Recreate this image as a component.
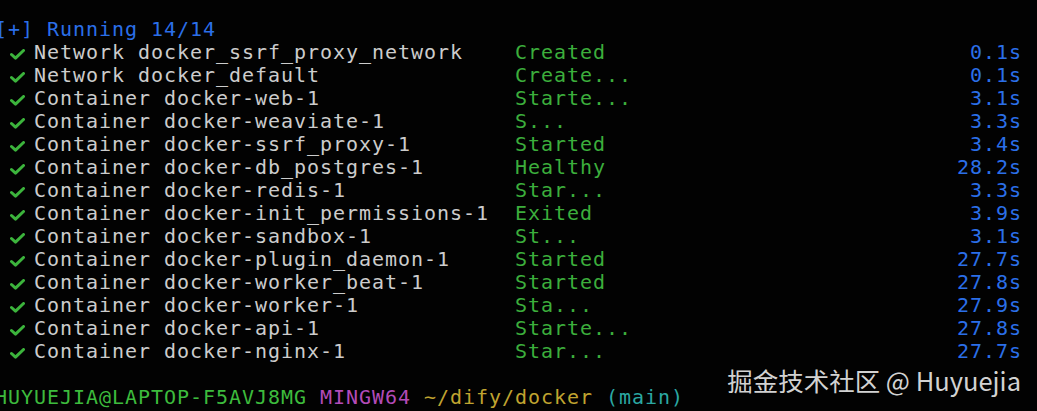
import React from "react";

const rows = [
  ["Network docker_ssrf_proxy_network", "Created", "0.1s"],
  ["Network docker_default", "Create...", "0.1s"],
  ["Container docker-web-1", "Starte...", "3.1s"],
  ["Container docker-weaviate-1", "S...", "3.3s"],
  ["Container docker-ssrf_proxy-1", "Started", "3.4s"],
  ["Container docker-db_postgres-1", "Healthy", "28.2s"],
  ["Container docker-redis-1", "Star...", "3.3s"],
  ["Container docker-init_permissions-1", "Exited", "3.9s"],
  ["Container docker-sandbox-1", "St...", "3.1s"],
  ["Container docker-plugin_daemon-1", "Started", "27.7s"],
  ["Container docker-worker_beat-1", "Started", "27.8s"],
  ["Container docker-worker-1", "Sta...", "27.9s"],
  ["Container docker-api-1", "Starte...", "27.8s"],
  ["Container docker-nginx-1", "Star...", "27.7s"],
];

function Check() {
  return (
    <span className="inline-block w-[26px] h-[23px] align-top relative">
      <svg
        className="absolute left-[2px] top-[8px]"
        width="15"
        height="11"
        viewBox="0 0 15 11"
      >
        <path
          d="M1.5 5.5 L5.5 9.2 L13.5 1.5"
          fill="none"
          stroke="#3cb43c"
          strokeWidth="3"
          strokeLinecap="round"
          strokeLinejoin="round"
        />
      </svg>
    </span>
  );
}

export default function App() {
  return (
    <div className="relative w-[1037px] h-[411px] bg-[#020202] overflow-hidden">
      <div
        className="ml-[-5px] pt-[18px] whitespace-pre text-[20px] leading-[23px] tracking-[0.96px] text-[#cccccc]"
        style={{ fontFamily: '"DejaVu Sans Mono", monospace' }}
      >
        <div className="h-[23px] text-[#2b6fe8]">[+] Running 14/14</div>
        {rows.map(([name, status, time], i) => (
          <div key={i} className="h-[23px]">
            <span> </span>
            <Check />
            <span className="text-[#cccccc]">{name.padEnd(37)}</span>
            <span className="text-[#3cae3c]">{status.padEnd(34)}</span>
            <span className="text-[#2b6fe8]">{time.padStart(5)}</span>
          </div>
        ))}
        <div className="h-[23px]"> </div>
        <div className="h-[23px]">
          <span className="text-[#3dbb3d]">HUYUEJIA@LAPTOP-F5AVJ8MG</span>
          <span> </span>
          <span className="text-[#b34bb8]">MINGW64</span>
          <span> </span>
          <span className="text-[#c0a430]">~/dify/docker</span>
          <span> </span>
          <span className="text-[#2ba8a2]">(main)</span>
        </div>
      </div>
      <div
        className="absolute right-[16px] top-[366px] text-[25.5px] leading-[28px] text-[#d2d2d2]"
        style={{ fontFamily: '"Noto Sans CJK SC", "Noto Sans", sans-serif' }}
      >
        掘金技术社区 @ Huyuejia
      </div>
    </div>
  );
}
